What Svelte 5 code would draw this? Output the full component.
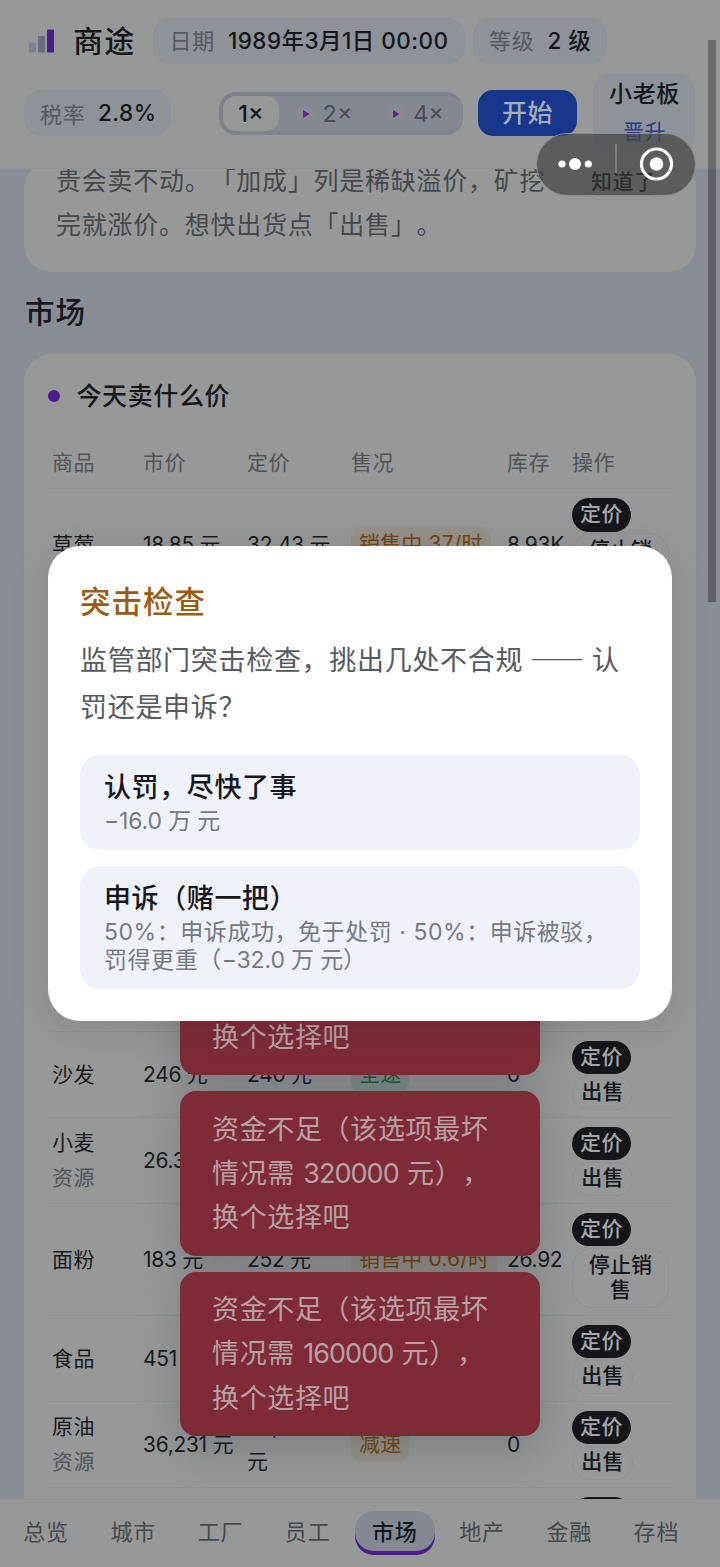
<script>
  const rows = [
    { name: '草莓', market: '18.85 元', price: '32.43 元', state: '销售中 37/时', tone: 'amber', stock: '8.93K', stop: true },
    { spacer: true },
    { name: '沙发', market: '246 元', price: '240 元', state: '全速', tone: 'green', stock: '0' },
    { name: '小麦', sub: '资源', market: '26.3', price: '', stock: '' },
    { name: '面粉', market: '183 元', price: '252 元', state: '销售中 0.6/时', tone: 'amber', stock: '26.92', stop: true },
    { name: '食品', market: '451', price: '', stock: '' },
    { name: '原油', sub: '资源', market: '36,231 元', price: ', 元', wrap: true, state: '减速', tone: 'amber', stock: '0' },
    { last: true }
  ];
  const tabs = ['总览', '城市', '工厂', '员工', '市场', '地产', '金融', '存档'];
  const toasts = [null, '320000', '160000'];
</script>

<div class="screen" lang="zh-CN">
  <header>
    <div class="bar first">
      <svg class="logo" width="26" height="24" viewBox="0 0 26 24">
        <rect x="0" y="13.5" width="7" height="10" rx="1" fill="#7d828e" />
        <rect x="9" y="7" width="7" height="16.5" rx="1" fill="#686d7e" />
        <rect x="18" y="0.5" width="7" height="23" rx="1" fill="#4b1c8a" />
      </svg>
      <h1>商途</h1>
      <div class="pill date"><span>日期</span><b>1989年3月1日 00:00</b></div>
      <div class="pill level"><span>等级</span><b>2 级</b></div>
    </div>
    <div class="bar second">
      <div class="pill tax"><span>税率</span><b>2.8%</b></div>
      <div class="speeds">
        <div class="speed on">1×</div>
        {#each ['2×', '4×'] as s}
          <div class="speed">
            <svg width="18" height="14" viewBox="0 0 18 14"><ellipse cx="9" cy="7" rx="9" ry="6" fill="#8d8a96" /><path d="M6 3 L12.5 7 L6 11Z" fill="#562a92" /></svg>{s}
          </div>
        {/each}
      </div>
      <div class="start">开始</div>
      <div class="rank"><b>小老板</b><span>晋升</span></div>
    </div>
  </header>

  <main>
    <section class="card tip">
      <p>贵会卖不动。「加成」列是稀缺溢价，矿挖<br />完就涨价。想快出货点「出售」。</p>
      <div class="ghost got">知道了</div>
    </section>
    <h2>市场</h2>
    <section class="card market">
      <h3><i></i>今天卖什么价</h3>
      <div class="row head">
        <span>商品</span><span>市价</span><span>定价</span><span>售况</span><span>库存</span><span>操作</span>
      </div>
      {#each rows as r}
        {#if r.spacer}
          <div class="row spacer"></div>
        {:else}
          <div class="row" class:tall={r.stop}>
            <div class="name">{r.name}{#if r.sub}<small>{r.sub}</small>{/if}</div>
            <div>{r.market}</div>
            <div class:wrap={r.wrap}>{r.price}</div>
            <div>{#if r.state}<em class={r.tone}>{r.state}</em>{/if}</div>
            <div>{r.stock}</div>
            <div class="ops">
              <div class="solid">{r.last ? '' : '定价'}</div>
              {#if r.stop}<div class="ghost stop">停止销<br />售</div>{:else if !r.last}<div class="ghost">出售</div>{/if}
            </div>
          </div>
        {/if}
      {/each}
    </section>
  </main>

  <nav>
    {#each tabs as t}
      <div class="tab"><span class:active={t === '市场'}>{t}</span></div>
    {/each}
  </nav>

  <div class="toasts">
    {#each toasts as n}
      <div class="toast">
        {#if n}资金不足（该选项最坏<br />情况需 <span class="num">{n}</span> 元），<br />{:else}<br /><br />{/if}换个选择吧
      </div>
    {/each}
  </div>

  <div class="modal">
    <h4>突击检查</h4>
    <p>监管部门突击检查，挑出几处不合规<span class="dash">——</span>认<br />罚还是申诉？</p>
    <div class="option"><b>认罚，尽快了事</b><span class="minus">−16.0 万 元</span></div>
    <div class="option"><b>申诉（赌一把）</b><span>50%：申诉成功，免于处罚 · 50%：申诉被驳，<br />罚得更重（<span class="minus inline">−32.0 万 元</span>）</span></div>
  </div>

  <div class="scroll"></div>

  <div class="capsule">
    <svg width="158" height="61" viewBox="0 0 158 61">
      <g fill="#fff"><circle cx="25" cy="30" r="3.6" /><circle cx="38" cy="30" r="6" /><circle cx="51.3" cy="30" r="3.6" /><circle cx="119.5" cy="30" r="6.8" /></g>
      <path d="M79 10V39" stroke="#7b7d7d" stroke-width="2" />
      <circle cx="119.5" cy="30" r="15" fill="none" stroke="#fff" stroke-width="3.2" />
    </svg>
  </div>
</div>

<style>
  :global(body) { background: #898d96; }
  * { box-sizing: border-box; margin: 0; }
  .screen {
    position: relative; width: 720px; height: 1567px; overflow: hidden;
    display: flex; flex-direction: column; background: #898d96; color: #15171c;
    font-family: Inter, "Noto Sans CJK SC", sans-serif; font-size: 21px;
    letter-spacing: 0.5px; white-space: nowrap; text-spacing-trim: space-all;
  }
  header { height: 168px; flex: none; background: #979999; position: relative; }
  .bar { display: flex; align-items: center; }
  .first { height: 46px; margin-top: 18px; padding-left: 29px; }
  h1 { font-size: 30px; font-weight: 500; letter-spacing: 1.3px; margin: -1px 0 0 18px; width: 80px; line-height: 46px; }
  .pill { height: 46px; border-radius: 17px; background: #8e9299; display: flex; align-items: center; padding: 0 0 4px 17px; gap: 13px; font-size: 22px; }
  .pill span { color: #555962; letter-spacing: 0.7px; }
  .pill b { font-weight: 500; font-size: 22.5px; }
  .date { width: 312px; padding-left: 16.5px; }
  .date b { letter-spacing: 0.45px; }
  .level { width: 134px; margin-left: 8px; padding-left: 16px; }
  .second { height: 80px; margin-top: 9px; padding-left: 24px; }
  .tax { width: 147px; gap: 12.5px; padding-left: 16px; padding-bottom: 1px; }
  .speeds { margin-left: 48px; width: 244px; height: 43px; border-radius: 17px; background: #848892; border: 4px solid #7e828c; border-right-width: 0; display: flex; font-size: 23.5px; color: #4a4e55; }
  .speed { display: flex; align-items: center; justify-content: center; gap: 6px; width: 91px; letter-spacing: 0; }
  .speed svg { margin: 2px 2px 0 0; }
  .speed.on { width: 56px; background: #979999; color: #15171c; border-radius: 13px; font-weight: 500; }
  .start { margin-left: 15px; width: 99px; height: 46px; border-radius: 15px; background: #18368c; color: #a6acba; display: grid; place-items: center; font-size: 25px; font-weight: 500; padding-bottom: 4px; }
  .rank { margin-left: 16px; width: 102px; height: 78px; border-radius: 17px; background: #8e9299; display: flex; flex-direction: column; align-items: center; font-size: 23px; letter-spacing: 0.7px; line-height: 37px; padding: 2px 0 0 1px; }
  .rank b { font-weight: 450; }
  .rank span { color: #213d8e; font-size: 21px; letter-spacing: 0.4px; }

  main { flex: 1; min-height: 0; overflow: hidden; padding: 0 24px; border-top: 1px solid #8f9196; }
  .card { background: #979999; border-radius: 28px; }
  .tip { height: 111px; margin-top: -8px; padding: 0 32px; display: flex; color: #45484d; font-size: 25px; letter-spacing: 0.75px; line-height: 44px; }
  .tip p { width: 526px; flex: none; margin-top: -2px; }
  .ghost { border: 1.5px solid #8e9195; border-radius: 17px; width: 61px; height: 34px; line-height: 29px; text-align: center; font-weight: 450; color: #15171c; font-size: 21px; letter-spacing: 0.2px; }
  .got { width: 84px; height: 38px; line-height: 37px; margin: 1px 0 0 0; text-align: left; padding-left: 8px; letter-spacing: 0.5px; color: #000; }
  h2 { font-size: 29.5px; font-weight: 450; letter-spacing: 1px; line-height: 80px; padding-left: 1px; height: 82px; }
  .market { height: 1260px; padding: 0 24px; }
  h3 { display: flex; align-items: center; gap: 17px; font-size: 25px; font-weight: 450; letter-spacing: 0.6px; height: 83px; padding-bottom: 4px; margin-left: -0.5px; }
  h3 i { width: 12px; height: 12px; border-radius: 6px; background: #4b1c8a; margin-top: 4px; }
  .row { display: grid; grid-template-columns: 91px 104px 104px 156px 65px 104px; align-items: center; padding-left: 4px; height: 86.1px; border-bottom: 1px solid #8d9194; line-height: 35px; color: #17191d; }
  .row > div { letter-spacing: -0.3px; }
  .row > .name { letter-spacing: 0.5px; }
  .head { height: 52px; color: #50545b; font-size: 21px; }
  .head span { letter-spacing: 0.5px; }
  .tall { height: 111.8px; }
  .spacer { height: 431px; }
  small { display: block; font-size: 21px; color: #51555d; }
  .wrap { white-space: normal; width: 30px; text-indent: 25px; }
  em { font-style: normal; display: inline-block; height: 35px; line-height: 33px; padding: 0 8px; border-radius: 11px; letter-spacing: 0.15px; }
  .amber { background: #96918a; color: #75450f; }
  .green { background: #84928c; color: #17633a; }
  .row > .ops { display: flex; flex-direction: column; align-self: start; padding-top: 9px; gap: 1.5px; }
  .solid { width: 59px; height: 33.5px; border-radius: 17px; background: #14161b; color: #a5a6a9; line-height: 31px; text-align: center; font-weight: 450; letter-spacing: 0.4px; }
  .stop { width: 97px; height: 60px; line-height: 25px; padding-top: 3px; border-radius: 20px; }

  nav { height: 68px; flex: none; background: #979999; border-top: 1px solid #8e9296; display: grid; grid-template-columns: repeat(8, 87.2px); padding-left: 2.5px; align-items: center; color: #45484e; font-size: 22px; }
  .tab { text-align: center; margin-top: -1px; }
  .tab span { display: inline-block; width: 80px; height: 44px; line-height: 43px; letter-spacing: 0.8px; }
  .tab .active { background: #848892; border-radius: 19px; box-shadow: inset 0 -4px 0 #4b1c8a; color: #15171c; font-weight: 500; }

  .toasts { position: absolute; left: 180px; top: 910.5px; width: 360px; display: flex; flex-direction: column; gap: 16px; }
  .toast { height: 164.6px; border-radius: 16px; background: #7e2b37; color: #b8a1a5; padding: 16.5px 32px; font-size: 27px; letter-spacing: 0.65px; line-height: 44.3px; box-shadow: 0 12px 44px rgba(20, 28, 40, 0.22); }
  .num { letter-spacing: -0.95px; }

  .modal { position: absolute; left: 48px; top: 546px; width: 624px; height: 475px; background: #fff; border-radius: 32px; padding: 32px; box-shadow: 0 6px 40px rgba(20, 24, 32, 0.14); }
  h4 { font-size: 30.5px; font-weight: 500; letter-spacing: 1px; line-height: 48px; color: #9d5a11; }
  .modal p { margin-top: 9px; font-size: 27px; letter-spacing: 0.7px; line-height: 47px; color: #555960; }
  .dash { font-family: "Noto Sans CJK SC", sans-serif; margin: 0 7px; }
  .option { background: #eff2fa; border-radius: 20px; height: 95px; padding: 16px 24px; margin-top: 24px; }
  .option + .option { height: 123px; margin-top: 16px; }
  .option b { display: block; font-size: 27px; font-weight: 500; letter-spacing: 0.6px; line-height: 34px; color: #15171c; }
  .option span { display: block; font-size: 23px; letter-spacing: 0.55px; line-height: 28px; padding-top: 1.5px; color: #757982; }
  .option .minus { letter-spacing: -0.15px; }
  .option .inline { display: inline; }

  .scroll { position: absolute; left: 708px; top: 40px; width: 8px; height: 562px; background: rgba(0, 0, 0, 0.31); }
  .capsule { position: absolute; left: 537px; top: 134px; width: 158px; height: 61px; border-radius: 31px; background: rgba(65, 67, 67, 0.7); box-shadow: 0 0 0 1px #8b8d8d; }
  .capsule svg { display: block; }
</style>
